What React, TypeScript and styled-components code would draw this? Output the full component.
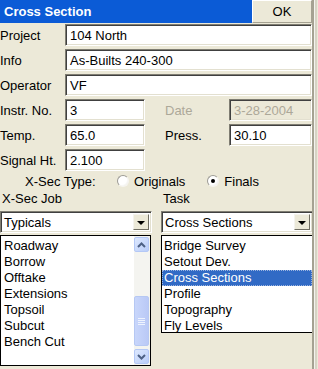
import React from "react"
import styled, { createGlobalStyle } from "styled-components"

const GlobalStyle = createGlobalStyle`
  html, body {
    margin: 0;
    padding: 0;
    background: #ece9d8;
  }
  body {
    font-family: "Liberation Sans", Arial, sans-serif;
    font-size: 13px;
    color: #000;
  }
`;

const Window = styled.div`
  width: 312px;
  height: 369px;
  background: #ece9d8;
  border-right: 2px solid #a5a292;
  box-shadow: 1px 0 0 #f4f3ee, 3px 0 0 #d6d3c4;
  overflow: hidden;
`;

const TitleBar = styled.div`
  display: flex;
  height: 23px;
`;

const Title = styled.div`
  flex: 1;
  background: #0b5bd6;
  color: #fff;
  font-weight: bold;
  font-size: 13px;
  line-height: 23px;
  padding-left: 4px;
`;

const OkButton = styled.button`
  width: 60px;
  height: 23px;
  margin: 0;
  padding: 0;
  background: #ece9d8;
  border: 1px solid;
  border-color: #fff #a5a292 #a5a292 #fff;
  font-family: inherit;
  font-size: 13px;
  color: #000;
`;

const Form = styled.div`
  display: flex;
  flex-direction: column;
  gap: 3px;
  padding-top: 1px;
`;

const Row = styled.div<{ $split?: boolean }>`
  display: grid;
  grid-template-columns: ${(p) => (p.$split ? "65px 80px 84px 83px" : "65px 247px")};
  height: 22px;
  align-items: center;
`;

const Label = styled.span<{ $indent?: number; $dim?: boolean }>`
  padding-left: ${(p) => p.$indent ?? 0}px;
  color: ${(p) => (p.$dim ? "#aca899" : "#000")};
  white-space: nowrap;
`;

const Field = styled.div<{ $disabled?: boolean }>`
  box-sizing: border-box;
  height: 22px;
  padding: 2px 4px 0;
  line-height: 17px;
  background: ${(p) => (p.$disabled ? "#ece9d8" : "#fff")};
  color: ${(p) => (p.$disabled ? "#aca899" : "#000")};
  border: 1px solid;
  border-color: #7f7d72 #fff #fff #7f7d72;
  box-shadow: inset 1px 1px 0 #404040, inset -1px -1px 0 #e3e0d0;
  white-space: nowrap;
  overflow: hidden;
`;

const TypeRow = styled.div`
  display: flex;
  align-items: center;
  height: 16px;
  margin-top: 2px;
  padding-left: 25px;
`;

const TypeLabel = styled.span`
  width: 92px;
`;

const RadioOption = styled.span`
  display: flex;
  align-items: center;
  gap: 5px;
  margin-right: 22px;
`;

const RadioDot = styled.span<{ $checked?: boolean }>`
  box-sizing: border-box;
  width: 12px;
  height: 12px;
  border-radius: 50%;
  border: 1px solid;
  border-color: #9d9c96 #f6f5f0 #f6f5f0 #9d9c96;
  background: radial-gradient(circle at 35% 35%, #fff 0 55%, #e2e1da 100%);
  position: relative;

  &::after {
    content: "";
    display: ${(p) => (p.$checked ? "block" : "none")};
    position: absolute;
    left: 3px;
    top: 3px;
    width: 4px;
    height: 4px;
    border-radius: 50%;
    background: #000;
  }
`;

const Lower = styled.div`
  display: grid;
  grid-template-columns: 152px 152px;
  column-gap: 9px;
  margin-top: 2px;
`;

const Column = styled.div`
  display: flex;
  flex-direction: column;
  align-items: stretch;
`;

const ColumnLabel = styled.div`
  height: 16px;
  line-height: 16px;
  padding-left: 2px;
  margin-bottom: 4px;
`;

const Combo = styled.div`
  box-sizing: border-box;
  height: 22px;
  display: flex;
  align-items: center;
  background: #fff;
  border: 1px solid;
  border-color: #7f7d72 #fff #fff #7f7d72;
  box-shadow: inset 1px 1px 0 #404040, inset -1px -1px 0 #e3e0d0;
  padding: 2px 2px 2px 3px;
`;

const ComboText = styled.span`
  flex: 1;
  padding-top: 1px;
`;

const ComboButton = styled.span`
  box-sizing: border-box;
  width: 16px;
  height: 16px;
  display: flex;
  align-items: center;
  justify-content: center;
  background: #ece9d8;
  border: 1px solid;
  border-color: #f4f3ee #716f64 #716f64 #f4f3ee;
`;

const Arrow = styled.span`
  width: 0;
  height: 0;
  border-left: 4px solid transparent;
  border-right: 4px solid transparent;
  border-top: 4px solid #000;
  margin-top: 1px;
`;

const ListBox = styled.div<{ $height: number; $width: number }>`
  box-sizing: border-box;
  width: ${(p) => p.$width}px;
  height: ${(p) => p.$height}px;
  margin-top: 2px;
  background: #fff;
  border: 1px solid #000;
  display: flex;
`;

const Items = styled.div`
  flex: 1;
  padding-top: 2px;
`;

const Item = styled.div<{ $selected?: boolean; $indent?: number }>`
  height: 16px;
  line-height: 16px;
  box-sizing: border-box;
  padding-left: ${(p) => p.$indent ?? 3}px;
  background: ${(p) => (p.$selected ? "#316ac5" : "transparent")};
  color: ${(p) => (p.$selected ? "#fff" : "#000")};
  outline: ${(p) => (p.$selected ? "1px dotted #9db5e0" : "none")};
  outline-offset: -1px;
`;

const ScrollBar = styled.div`
  width: 15px;
  display: flex;
  flex-direction: column;
  background: #f4f4f0;
  padding: 1px 1px 1px 0;
`;

const ScrollBtn = styled.div`
  box-sizing: border-box;
  height: 15px;
  border: 1px solid #b4c8f6;
  border-radius: 2px;
  background: linear-gradient(135deg, #dde8fe, #b9cdf9);
  display: flex;
  align-items: center;
  justify-content: center;
`;

const Track = styled.div`
  flex: 1;
  display: flex;
  flex-direction: column;
  justify-content: flex-end;
  padding-bottom: 3px;
`;

const Thumb = styled.div`
  box-sizing: border-box;
  height: 50px;
  border: 1px solid #b6c8f3;
  border-radius: 2px;
  background: linear-gradient(90deg, #c8d6fb, #bac9f6);
  display: flex;
  flex-direction: column;
  align-items: center;
  justify-content: center;
  gap: 1px;
`;

const Grip = styled.span`
  width: 7px;
  height: 1px;
  background: #eef3fe;
`;

const Chevron = ({ up }: { up?: boolean }) => (
  <svg width="9" height="6" viewBox="0 0 9 6">
    <path
      d={up ? "M1 5 L4.5 1.5 L8 5" : "M1 1 L4.5 4.5 L8 1"}
      fill="none"
      stroke="#4d6185"
      strokeWidth="2"
    />
  </svg>
);

const jobs = ["Roadway", "Borrow", "Offtake", "Extensions", "Topsoil", "Subcut", "Bench Cut"];
const tasks = ["Bridge Survey", "Setout Dev.", "Cross Sections", "Profile", "Topography", "Fly Levels"];

export default function App() {
  return (
    <>
      <GlobalStyle />
      <Window>
        <TitleBar>
          <Title>Cross Section</Title>
          <OkButton>OK</OkButton>
        </TitleBar>
        <Form>
          <Row>
            <Label>Project</Label>
            <Field>104 North</Field>
          </Row>
          <Row>
            <Label>Info</Label>
            <Field>As-Builts 240-300</Field>
          </Row>
          <Row>
            <Label>Operator</Label>
            <Field>VF</Field>
          </Row>
          <Row $split>
            <Label>Instr. No.</Label>
            <Field>3</Field>
            <Label $indent={20} $dim>Date</Label>
            <Field $disabled>3-28-2004</Field>
          </Row>
          <Row $split>
            <Label>Temp.</Label>
            <Field>65.0</Field>
            <Label $indent={20}>Press.</Label>
            <Field>30.10</Field>
          </Row>
          <Row $split>
            <Label>Signal Ht.</Label>
            <Field>2.100</Field>
          </Row>
        </Form>
        <TypeRow>
          <TypeLabel>X-Sec Type:</TypeLabel>
          <RadioOption>
            <RadioDot />
            Originals
          </RadioOption>
          <RadioOption>
            <RadioDot $checked />
            Finals
          </RadioOption>
        </TypeRow>
        <Lower>
          <Column>
            <ColumnLabel>X-Sec Job</ColumnLabel>
            <Combo>
              <ComboText>Typicals</ComboText>
              <ComboButton>
                <Arrow />
              </ComboButton>
            </Combo>
            <ListBox $width={151} $height={131}>
              <Items>
                {jobs.map((j) => (
                  <Item key={j}>{j}</Item>
                ))}
              </Items>
              <ScrollBar>
                <ScrollBtn>
                  <Chevron up />
                </ScrollBtn>
                <Track>
                  <Thumb>
                    <Grip />
                    <Grip />
                    <Grip />
                    <Grip />
                  </Thumb>
                </Track>
                <ScrollBtn>
                  <Chevron />
                </ScrollBtn>
              </ScrollBar>
            </ListBox>
          </Column>
          <Column>
            <ColumnLabel>Task</ColumnLabel>
            <Combo>
              <ComboText>Cross Sections</ComboText>
              <ComboButton>
                <Arrow />
              </ComboButton>
            </Combo>
            <ListBox $width={152} $height={98}>
              <Items>
                {tasks.map((t) => (
                  <Item key={t} $indent={2} $selected={t === "Cross Sections"}>
                    {t}
                  </Item>
                ))}
              </Items>
            </ListBox>
          </Column>
        </Lower>
      </Window>
    </>
  );
}
